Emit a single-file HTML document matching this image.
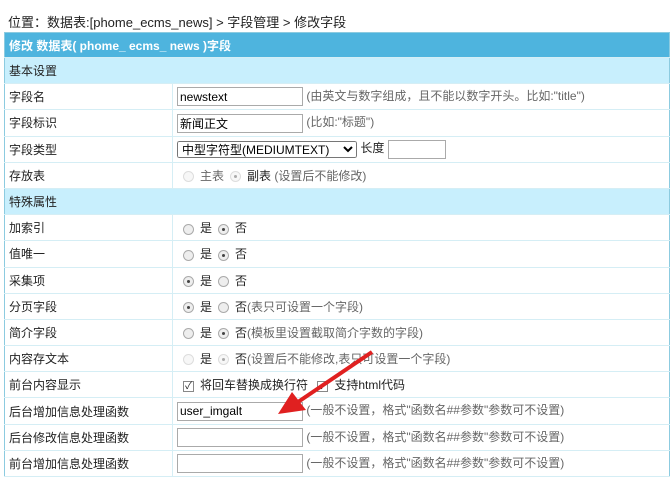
<!DOCTYPE html><html><head><meta charset="utf-8"><style>
body{margin:0;background:#fff;font-family:"Liberation Sans","Noto Sans CJK SC",sans-serif;font-size:12px;color:#222;width:672px;height:476px;overflow:hidden;position:relative}
.pos{position:absolute;left:8px;top:12px;font-size:13px}
table{position:absolute;left:4px;top:32px;width:666px;border-collapse:collapse;border:1px solid #8ccbe0}
td{height:25.2px;padding:0 0 0 4px;border-bottom:1px solid #d5eef5;white-space:nowrap}
td.l{width:163px;border-right:1px solid #d5eef5}
tr.h td{background:#4eb4de;color:#fff;font-weight:bold;height:24px}
tr.s td{background:#c8effd}
input.t{height:17px;border:1px solid #aaa;width:120px;padding:0 2px;font-size:12px;vertical-align:middle;font-family:inherit}
.g{color:#666}
.r{display:inline-block;width:11px;height:11px;border-radius:50%;border:1px solid #aaa;background:#eee;vertical-align:middle;margin:0 6px 0 6px;box-sizing:border-box;position:relative}
.r.on::after{content:"";position:absolute;left:3px;top:3px;width:3px;height:3px;border-radius:50%;background:#444}
.r.d{border-color:#ddd;background:#f7f7f7}
.r.d.on::after{background:#aaa}
.c{display:inline-block;width:11px;height:11px;border:1px solid #888;vertical-align:middle;margin:0 6px;font-size:10px;line-height:10px;text-align:center;box-sizing:border-box}
select{height:17px;font-size:12px;width:180px;vertical-align:middle;font-family:inherit}
</style></head><body>
<div class="pos">位置：数据表:[phome_ecms_news] &gt; 字段管理 &gt; 修改字段</div>
<table>
<tr class="h"><td colspan="2">修改 数据表( phome_ ecms_ news )字段</td></tr>
<tr class="s"><td colspan="2">基本设置</td></tr>
<tr><td class="l">字段名</td><td><input class="t" value="newstext"> <span class="g">(由英文与数字组成，且不能以数字开头。比如:"title")</span></td></tr>
<tr><td class="l">字段标识</td><td><input class="t" value="新闻正文"> <span class="g">(比如:"标题")</span></td></tr>
<tr><td class="l">字段类型</td><td><select><option>中型字符型(MEDIUMTEXT)</option></select> 长度 <input class="t" style="width:52px"></td></tr>
<tr><td class="l">存放表</td><td><span class="r d"></span><span class="g">主表</span><span class="r d on"></span>副表 <span class="g">(设置后不能修改)</span></td></tr>
<tr class="s"><td colspan="2">特殊属性</td></tr>
<tr><td class="l">加索引</td><td><span class="r"></span>是<span class="r on"></span>否</td></tr>
<tr><td class="l">值唯一</td><td><span class="r"></span>是<span class="r on"></span>否</td></tr>
<tr><td class="l">采集项</td><td><span class="r on"></span>是<span class="r"></span>否</td></tr>
<tr><td class="l">分页字段</td><td><span class="r on"></span>是<span class="r"></span>否<span class="g">(表只可设置一个字段)</span></td></tr>
<tr><td class="l">简介字段</td><td><span class="r"></span>是<span class="r on"></span>否<span class="g">(模板里设置截取简介字数的字段)</span></td></tr>
<tr><td class="l">内容存文本</td><td><span class="r d"></span>是<span class="r d on"></span>否<span class="g">(设置后不能修改,表只可设置一个字段)</span></td></tr>
<tr><td class="l">前台内容显示</td><td><span class="c">✓</span>将回车替换成换行符 <span class="c">✓</span>支持html代码</td></tr>
<tr><td class="l">后台增加信息处理函数</td><td><input class="t" value="user_imgalt"> <span class="g">(一般不设置，格式"函数名##参数"参数可不设置)</span></td></tr>
<tr><td class="l">后台修改信息处理函数</td><td><input class="t"> <span class="g">(一般不设置，格式"函数名##参数"参数可不设置)</span></td></tr>
<tr><td class="l">前台增加信息处理函数</td><td><input class="t"> <span class="g">(一般不设置，格式"函数名##参数"参数可不设置)</span></td></tr>
</table>
<svg style="position:absolute;left:0;top:0" width="672" height="476"><line x1="372" y1="352" x2="298" y2="402" stroke="#e02020" stroke-width="4"/><polygon points="278,414 292,392 306,410" fill="#e02020"/></svg>
</body></html>
